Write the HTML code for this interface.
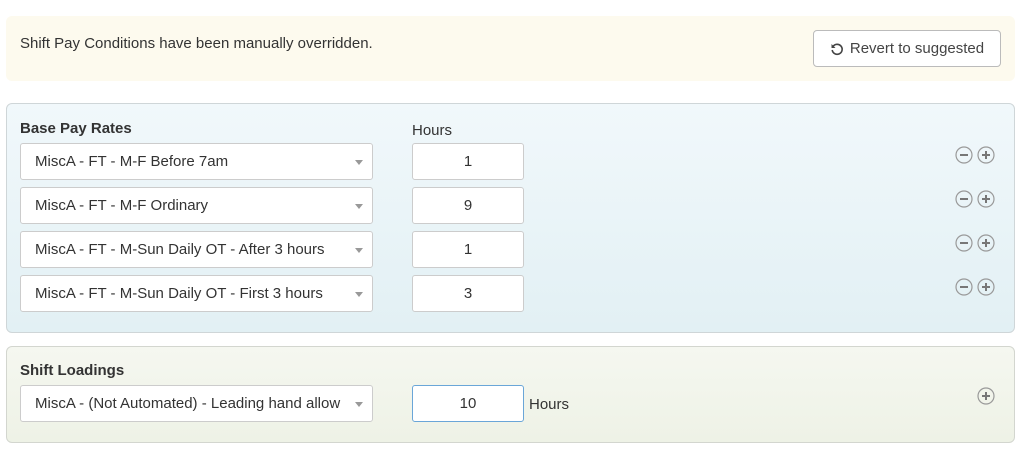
<!DOCTYPE html>
<html><head><style>
*{box-sizing:border-box;margin:0;padding:0}
body{width:1024px;height:454px;background:#fff;font-family:"Liberation Sans",sans-serif;color:#333;position:relative;overflow:hidden;font-size:15px}
.ab{position:absolute}
.banner{left:6px;top:16px;width:1009px;height:65px;background:#fdfaee;border-radius:6px}
.btn{left:813px;top:30px;width:188px;height:37px;border:1px solid #bbb;border-radius:4px;background:#fff;font-size:15px;color:#444;display:flex;align-items:center;justify-content:center;gap:6px}
.p1{left:6px;top:103px;width:1009px;height:230px;border:1px solid #cfd6d8;border-radius:6px;background:linear-gradient(#f1f8fb,#e2f0f4)}
.p2{left:6px;top:346px;width:1009px;height:97px;border:1px solid #d3d6cf;border-radius:6px;background:linear-gradient(#f5f7f0,#eef2e6)}
.sel{left:20px;width:353px;height:37px;background:#fff;border:1px solid #ccc;border-radius:3px;padding-left:14px;line-height:35px;font-size:15px;color:#333;white-space:nowrap;overflow:hidden}
.sel:after{content:"";position:absolute;right:9px;top:16px;border:4px solid transparent;border-top:5px solid #999}
.inp{left:412px;width:112px;height:37px;background:#fff;border:1px solid #ccc;border-radius:3px;text-align:center;line-height:35px;font-size:15px}
.h{font-weight:bold;font-size:15px;color:#333}
.ic{width:16px;height:16px}
</style></head><body>
<div class="ab banner"></div>
<div class="ab" style="left:20px;top:35px;font-size:15px;color:#333">Shift Pay Conditions have been manually overridden.</div>
<div class="ab btn"><svg width="14" height="14" viewBox="0 0 14 14"><path d="M3 4.5A5 5 0 1 1 2.2 8" fill="none" stroke="#444" stroke-width="1.6"/><path d="M1.5 2v4h4z" fill="#444"/></svg>Revert to suggested</div>
<div class="ab p1"></div>
<div class="ab h" style="left:20px;top:120px">Base Pay Rates</div>
<div class="ab" style="left:412px;top:122px">Hours</div>
<div class="ab sel" style="top:143px">MiscA - FT - M-F Before 7am</div>
<div class="ab inp" style="top:143px">1</div>
<div class="ab sel" style="top:187px">MiscA - FT - M-F Ordinary</div>
<div class="ab inp" style="top:187px">9</div>
<div class="ab sel" style="top:231px">MiscA - FT - M-Sun Daily OT - After 3 hours</div>
<div class="ab inp" style="top:231px">1</div>
<div class="ab sel" style="top:275px">MiscA - FT - M-Sun Daily OT - First 3 hours</div>
<div class="ab inp" style="top:275px">3</div>
<svg class="ab" style="left:954px;top:146px" width="44" height="160">
<g fill="none" stroke="#999" stroke-width="1.2">
<circle cx="10" cy="9" r="8"/><circle cx="32" cy="9" r="8"/>
<circle cx="10" cy="53" r="8"/><circle cx="32" cy="53" r="8"/>
<circle cx="10" cy="97" r="8"/><circle cx="32" cy="97" r="8"/>
<circle cx="10" cy="141" r="8"/><circle cx="32" cy="141" r="8"/>
</g>
<g stroke="#777" stroke-width="2">
<path d="M6 9h8M28 9h8M32 5v8"/>
<path d="M6 53h8M28 53h8M32 49v8"/>
<path d="M6 97h8M28 97h8M32 93v8"/>
<path d="M6 141h8M28 141h8M32 137v8"/>
</g></svg>
<div class="ab p2"></div>
<div class="ab h" style="left:20px;top:362px">Shift Loadings</div>
<div class="ab sel" style="top:385px;padding-right:30px;text-overflow:clip">MiscA - (Not Automated) - Leading hand allow</div>
<div class="ab inp" style="top:385px;border-color:#6aa6d8">10</div>
<div class="ab" style="left:529px;top:396px">Hours</div>
<svg class="ab" style="left:976px;top:386px" width="20" height="20"><circle cx="10" cy="10" r="8" fill="none" stroke="#999" stroke-width="1.2"/><path d="M6 10h8M10 6v8" stroke="#777" stroke-width="2"/></svg>
</body></html>
